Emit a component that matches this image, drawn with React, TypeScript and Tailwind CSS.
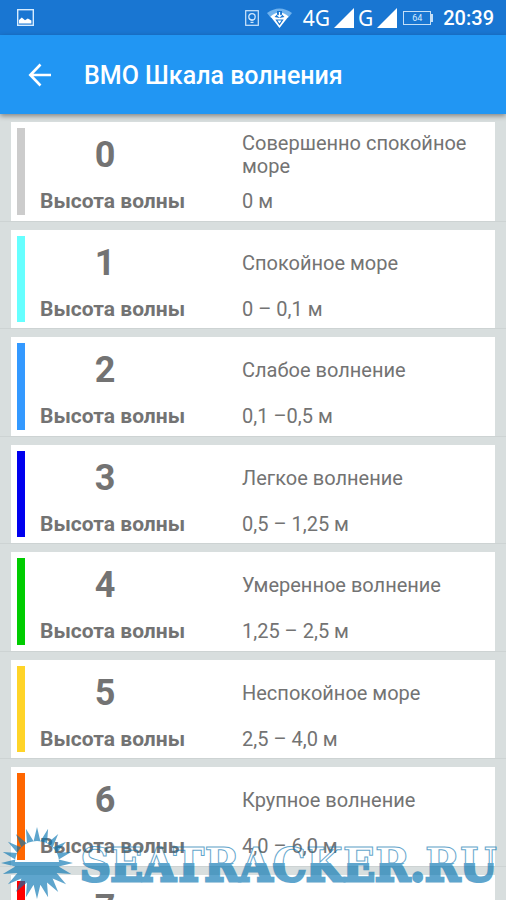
import React from 'react'

interface SeaState {
  color: string
  height: string
  level: number
  name: string
}

const seaStates: SeaState[] = [
  { color: 'bg-[#cccccc]', height: '0 м', level: 0, name: 'Совершенно спокойное море' },
  { color: 'bg-[#66ffff]', height: '0 – 0,1 м', level: 1, name: 'Спокойное море' },
  { color: 'bg-[#3399ff]', height: '0,1 –0,5 м', level: 2, name: 'Слабое волнение' },
  { color: 'bg-[#0000ee]', height: '0,5 – 1,25 м', level: 3, name: 'Легкое волнение' },
  { color: 'bg-[#00cc00]', height: '1,25 – 2,5 м', level: 4, name: 'Умеренное волнение' },
  { color: 'bg-[#ffd428]', height: '2,5 – 4,0 м', level: 5, name: 'Неспокойное море' },
  { color: 'bg-[#ff6600]', height: '4,0 – 6,0 м', level: 6, name: 'Крупное волнение' },
  { color: 'bg-[#ff0000]', height: '6,0 – 9,0 м', level: 7, name: 'Сильное волнение' },
]

const SignalTriangle: React.FC = () => (
  <svg className="w-5 h-5" fill="#fff" viewBox="0 0 20 20">
    <path d="M20 0v20H0z" />
  </svg>
)

const StatusBar: React.FC = () => (
  <div className="h-[35px] shrink-0 bg-[#1976d2] text-white flex items-center justify-between pl-[17px] pr-3">
    <svg className="w-[17px] h-[17px]" fill="none" viewBox="0 0 17 17">
      <rect height="15.6" stroke="#d6ecff" strokeWidth="1.4" width="15.6" x=".7" y=".7" />
      <path d="M2 14.5v-3.6l2.8-2.4 3.2 2.8 2.8-1.8 3.6 2v3z" fill="#fff" />
    </svg>
    <div className="flex items-center">
      <svg className="w-[14px] h-4" fill="none" stroke="#cfe6fb" viewBox="0 0 14 16">
        <rect height="14.6" strokeWidth="1.2" width="12.6" x=".7" y=".7" />
        <circle cx="7" cy="6.8" r="3.2" strokeWidth="1.3" />
        <path d="M5.5 10.2h3M5.5 12.3h3" strokeWidth="1.2" />
      </svg>
      <svg className="w-[25px] h-5 ml-2" viewBox="0 0 25 20">
        <path d="M0 5Q12.5-4 25 5L21 10H4z" fill="#6fb2ee" />
        <path d="M3.5 8.5Q8 4.5 12.5 4.5T21.5 8.5L12.5 20z" fill="#fff" />
        <path d="M10 3h5v3.5L17.5 9l-5 1-5-1L10 6.5z" fill="#1976d2" />
        <path d="M12.5 4v4M10.5 7l2 2 2-2" fill="none" stroke="#fff" strokeWidth="1.2" />
        <path d="M9.5 12h6l-3 4.5z" fill="none" stroke="#1976d2" strokeWidth="1.2" />
      </svg>
      <span className="ml-[11px] font-['Liberation_Sans_Narrow','Noto_Sans',sans-serif] text-[21px] leading-6">4G</span>
      <span className="ml-1"><SignalTriangle /></span>
      <span className="ml-1 font-['Liberation_Sans_Narrow','Noto_Sans',sans-serif] text-[21px] leading-6">G</span>
      <span className="ml-1"><SignalTriangle /></span>
      <div className="ml-[6px] flex items-center">
        <span className="w-7 h-[14px] border border-[#c4dff7] text-[9px] leading-3 text-center text-[#d6ecff]">64</span>
        <span className="w-[2px] h-2 bg-[#c4dff7]" />
      </div>
      <span className="ml-[10px] text-[20px] leading-6 font-medium">20:39</span>
    </div>
  </div>
)

const SeaStateRow: React.FC<{ state: SeaState }> = ({ state }) => (
  <li className="flex px-[11px] pt-2 border-b border-[#cdd3d3] odd:min-h-[108px] even:min-h-[107px]">
    <div className="flex-1 flex bg-white py-[6px] pl-[6px]">
      <div className={`w-2 shrink-0 ${state.color}`} />
      <div className="flex-1 flex flex-col -mt-[6px]">
        <div className="flex items-center h-[66px] pl-[15px]">
          <div className="w-[202px] shrink-0">
            <div className="w-[130px] text-center text-[36px] leading-10 font-bold">{state.level}</div>
          </div>
          <div className="flex-1 pr-4 text-[20px] leading-[23px]">{state.name}</div>
        </div>
        <div className="flex items-center h-[26px] pl-[15px]">
          <div className="w-[202px] shrink-0 text-[21px] leading-6 font-bold">Высота волны</div>
          <div className="flex-1 text-[20px] leading-6">{state.height}</div>
        </div>
      </div>
    </div>
  </li>
)

const RAYS = 20

// Star outline, rays alternate with the disc edge
const sunPoints = Array.from({ length: RAYS * 2 }, (_, i) => {
  const angle = (i * Math.PI) / RAYS - Math.PI / 2
  const r = i % 2 === 0 ? 36 : 22
  return `${(37 + r * Math.cos(angle)).toFixed(1)} ${(43 + r * Math.sin(angle)).toFixed(1)}`
}).join('L')

const Watermark: React.FC = () => (
  <svg
    className="absolute inset-x-0 bottom-0 w-full pointer-events-none"
    opacity=".64"
    viewBox="0 0 506 80"
  >
    <defs>
      <clipPath id="above">
        <rect height="43" width="506" />
      </clipPath>
      <clipPath id="below">
        <rect height="37" width="506" y="43" />
      </clipPath>
      <text
        className="font-['DejaVu_Serif_Condensed','DejaVu_Serif',serif] font-bold text-[47px]"
        id="wordmark"
        x="80"
        y="61"
      >
        SEATRACKER.RU
      </text>
    </defs>
    <path d={`M${sunPoints}ZM15 42a22 21 0 0 1 44 0z`} fill="#0574b1" fillRule="evenodd" />
    <g clipPath="url(#above)">
      <use fill="none" href="#wordmark" stroke="#0574b1" />
    </g>
    <g clipPath="url(#below)">
      <use fill="#0574b1" href="#wordmark" stroke="#0574b1" strokeWidth="3" />
    </g>
  </svg>
)

const App: React.FC = () => {
  return (
    <div className="relative h-screen overflow-hidden flex flex-col bg-[#d8dede] text-[#737373] font-[Roboto,sans-serif]">
      <StatusBar />

      {/* Header */}
      <header className="relative h-[79px] shrink-0 flex items-center bg-[#2196f3] text-white pl-7 shadow-[0_2px_5px_rgba(0,0,0,0.4)]">
        <button aria-label="Назад" type="button">
          <svg className="w-6 h-6" fill="none" stroke="currentColor" strokeWidth="2.6" viewBox="0 0 24 24">
            <path d="M12.5 1.5L2.3 12l10.2 10.5M2.3 12H23" />
          </svg>
        </button>
        <h1 className="ml-8 pt-[2px] text-[25px] leading-8 font-medium">ВМО Шкала волнения</h1>
      </header>

      {/* Scale */}
      <main className="flex-1 min-h-0 overflow-hidden">
        <ul>
          {seaStates.map((state) => (
            <SeaStateRow key={state.level} state={state} />
          ))}
        </ul>
      </main>

      <Watermark />
    </div>
  )
}

export default App
